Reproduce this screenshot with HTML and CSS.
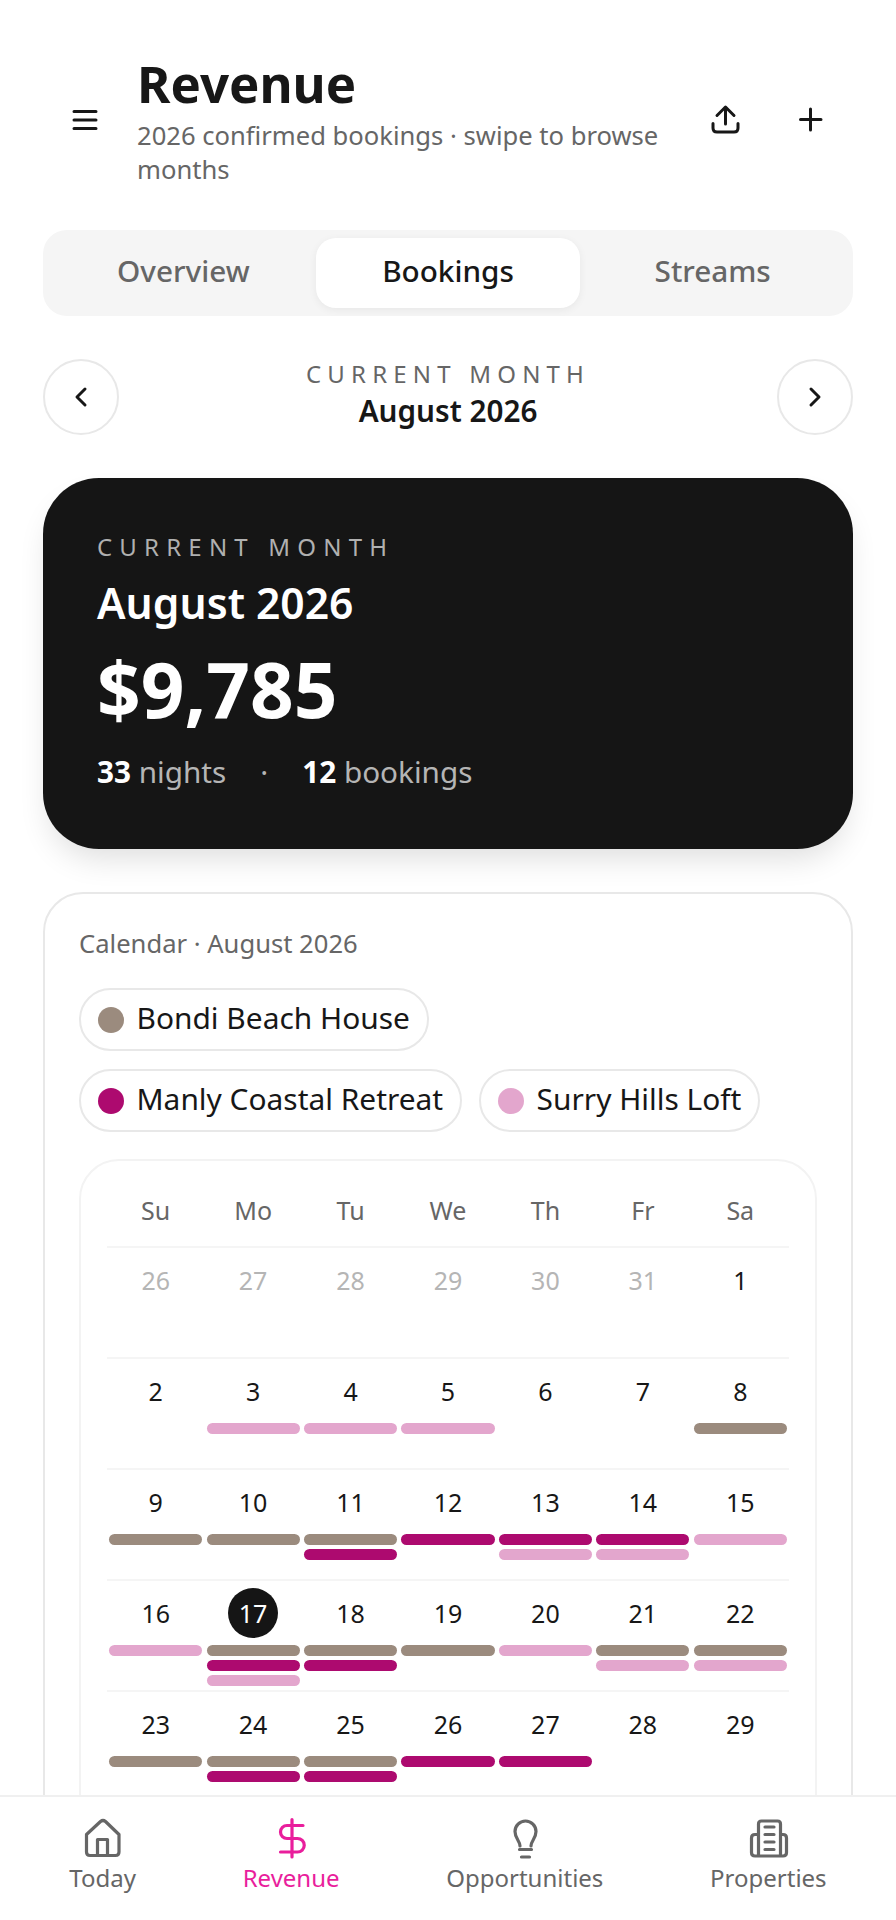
FILE: index.html
```html
<!DOCTYPE html>
<html lang="en">

<head>
    <meta charset="UTF-8">
    <meta name="viewport" content="width=device-width, initial-scale=1.0">
    <title>Revenue</title>
    <link rel="stylesheet" href="styles.css">
</head>

<body>
    <main class="page">
        <header class="top-bar">
            <button class="icon-btn" type="button" aria-label="Menu">
                <svg class="icon" viewBox="0 0 40 40"><path d="M9 13.500H31M9 22H31M9 30.500H31" /></svg>
            </button>
            <div class="top-title">
                <h1>Revenue</h1>
                <p>2026 confirmed bookings · swipe to browse months</p>
            </div>
            <div class="top-actions">
                <button class="icon-btn" type="button" aria-label="Share">
                    <svg class="icon" viewBox="0 0 40 40"><path d="M18.500 9V26M10 17.500L18.500 9L27 17.500M6 25.500V30Q6 34 10 34H27Q31 34 31 30V25.500" /></svg>
                </button>
                <button class="icon-btn" type="button" aria-label="Add">
                    <svg class="icon" viewBox="0 0 40 40"><path d="M19.500 11V32M9.500 21.500H30" /></svg>
                </button>
            </div>
        </header>

        <div class="tabs">
            <div class="tab">Overview</div>
            <div class="tab active">Bookings</div>
            <div class="tab">Streams</div>
        </div>

        <div class="month-nav">
            <button class="round-btn" type="button" aria-label="Previous month">
                <svg class="icon" viewBox="0 0 40 40"><path d="M24 12L16 20L24 28" /></svg>
            </button>
            <div class="month-label">
                <div class="eyebrow">CURRENT MONTH</div>
                <div class="month-name">August 2026</div>
            </div>
            <button class="round-btn" type="button" aria-label="Next month">
                <svg class="icon" viewBox="0 0 40 40"><path d="M16 12L24 20L16 28" /></svg>
            </button>
        </div>

        <section class="hero">
            <div class="eyebrow hero-eyebrow">CURRENT MONTH</div>
            <div class="hero-month">August 2026</div>
            <div class="hero-amount">$9,785</div>
            <div class="hero-stats">
                <span><b>33</b> nights</span>
                <span class="sep">·</span>
                <span><b>12</b> bookings</span>
            </div>
        </section>

        <section class="calendar-card">
            <div class="card-title">Calendar · August 2026</div>
            <div class="legend">
                <div class="chip"><span class="dot tan"></span>Bondi Beach House</div>
                <div class="chip"><span class="dot magenta"></span>Manly Coastal Retreat</div>
                <div class="chip"><span class="dot pink"></span>Surry Hills Loft</div>
            </div>

            <div class="calendar">
                <div class="week-head">
                    <div>Su</div><div>Mo</div><div>Tu</div><div>We</div><div>Th</div><div>Fr</div><div>Sa</div>
                </div>

                <div class="week">
                    <div class="day muted"><div class="num">26</div></div>
                    <div class="day muted"><div class="num">27</div></div>
                    <div class="day muted"><div class="num">28</div></div>
                    <div class="day muted"><div class="num">29</div></div>
                    <div class="day muted"><div class="num">30</div></div>
                    <div class="day muted"><div class="num">31</div></div>
                    <div class="day"><div class="num">1</div></div>
                </div>

                <div class="week">
                    <div class="day"><div class="num">2</div></div>
                    <div class="day"><div class="num">3</div><i class="bar pink"></i></div>
                    <div class="day"><div class="num">4</div><i class="bar pink"></i></div>
                    <div class="day"><div class="num">5</div><i class="bar pink"></i></div>
                    <div class="day"><div class="num">6</div></div>
                    <div class="day"><div class="num">7</div></div>
                    <div class="day"><div class="num">8</div><i class="bar tan"></i></div>
                </div>

                <div class="week">
                    <div class="day"><div class="num">9</div><i class="bar tan"></i></div>
                    <div class="day"><div class="num">10</div><i class="bar tan"></i></div>
                    <div class="day"><div class="num">11</div><i class="bar tan"></i><i class="bar magenta"></i></div>
                    <div class="day"><div class="num">12</div><i class="bar magenta"></i></div>
                    <div class="day"><div class="num">13</div><i class="bar magenta"></i><i class="bar pink"></i></div>
                    <div class="day"><div class="num">14</div><i class="bar magenta"></i><i class="bar pink"></i></div>
                    <div class="day"><div class="num">15</div><i class="bar pink"></i></div>
                </div>

                <div class="week">
                    <div class="day"><div class="num">16</div><i class="bar pink"></i></div>
                    <div class="day today"><div class="num">17</div><i class="bar tan"></i><i class="bar magenta"></i><i class="bar pink"></i></div>
                    <div class="day"><div class="num">18</div><i class="bar tan"></i><i class="bar magenta"></i></div>
                    <div class="day"><div class="num">19</div><i class="bar tan"></i></div>
                    <div class="day"><div class="num">20</div><i class="bar pink"></i></div>
                    <div class="day"><div class="num">21</div><i class="bar tan"></i><i class="bar pink"></i></div>
                    <div class="day"><div class="num">22</div><i class="bar tan"></i><i class="bar pink"></i></div>
                </div>

                <div class="week">
                    <div class="day"><div class="num">23</div><i class="bar tan"></i></div>
                    <div class="day"><div class="num">24</div><i class="bar tan"></i><i class="bar magenta"></i></div>
                    <div class="day"><div class="num">25</div><i class="bar tan"></i><i class="bar magenta"></i></div>
                    <div class="day"><div class="num">26</div><i class="bar magenta"></i></div>
                    <div class="day"><div class="num">27</div><i class="bar magenta"></i></div>
                    <div class="day"><div class="num">28</div></div>
                    <div class="day"><div class="num">29</div></div>
                </div>
            </div>
        </section>
    </main>

    <nav class="bottom-nav">
        <div class="nav-item">
            <svg class="nav-icon" viewBox="0 0 44 44">
                <path d="M5.500 18.500L19.500 5.500Q22 3.500 24.500 5.500L38 18.500V36Q38 39.500 34.500 39.500H9Q5.500 39.500 5.500 36ZM16.500 39.500V23.500H26.500V39.500" />
            </svg>
            <span>Today</span>
        </div>
        <div class="nav-item active">
            <svg class="nav-icon" viewBox="0 0 44 44">
                <path d="M23 3.500V41M34 9.500H18A6.500 6.500 0 0 0 18 22.500H28.500A6.750 6.750 0 0 1 28.500 36H11.500" />
            </svg>
            <span>Revenue</span>
        </div>
        <div class="nav-item">
            <svg class="nav-icon" viewBox="0 0 44 44">
                <path d="M17 30C17 25 12 22.500 12 15.500A10.500 10.500 0 0 1 33 15.500C33 22.500 28 25 28 30M16.500 33.500H28.500M18.500 41H26.500" />
            </svg>
            <span>Opportunities</span>
        </div>
        <div class="nav-item">
            <svg class="nav-icon" viewBox="0 0 44 44">
                <path d="M12.500 40V8Q12.500 5 15.500 5H31.500Q34.500 5 34.500 8V40ZM12.500 18.500H9Q5.500 18.500 5.500 22V36.500Q5.500 40 9 40H37Q40.500 40 40.500 36.500V22Q40.500 18.500 37 18.500H34.500M19 11H28M19 18.500H28M19 26H28M19 33.500H28" />
            </svg>
            <span>Properties</span>
        </div>
    </nav>
</body>

</html>
```
FILE: styles.css
```css
* {
    box-sizing: border-box;
}

body {
    font-family: "Noto Sans", "Open Sans", sans-serif;
    background-color: #ffffff;
    color: #171717;
    margin: 0;
    height: 1920px;
    display: flex;
    flex-direction: column;
    overflow: hidden;
}

.page {
    flex: 1;
    min-height: 0;
    overflow: hidden;
    display: flex;
    flex-direction: column;
    gap: 43px;
    padding: 48px 43px 0;
}

button {
    background: none;
    border: none;
    padding: 0;
    font: inherit;
    color: inherit;
    display: flex;
    align-items: center;
    justify-content: center;
}

.icon {
    width: 40px;
    height: 40px;
    fill: none;
    stroke: #171717;
    stroke-width: 3;
    stroke-linecap: round;
    stroke-linejoin: round;
}

/* header */
.top-bar {
    display: flex;
    align-items: center;
    gap: 10px;
    flex-shrink: 0;
}

.icon-btn {
    width: 84px;
    height: 84px;
    flex-shrink: 0;
}

.top-title {
    flex: 1;
    min-width: 0;
}

.top-title h1 {
    margin: 0;
    font-size: 51px;
    line-height: 71px;
    font-weight: 700;
}

.top-title p {
    margin: 0;
    font-size: 25.6px;
    line-height: 34px;
    color: #666666;
}

.top-actions {
    display: flex;
}

/* tabs */
.tabs {
    display: flex;
    flex-shrink: 0;
    height: 86px;
    padding: 8px;
    background-color: #f5f5f5;
    border-radius: 24px;
}

.tab {
    flex: 1;
    display: flex;
    align-items: center;
    justify-content: center;
    padding-bottom: 5px;
    font-size: 29.7px;
    font-weight: 500;
    color: #666666;
    border-radius: 20px;
}

.tab.active {
    background-color: #ffffff;
    color: #171717;
    box-shadow: 0 2px 8px rgba(0, 0, 0, 0.06);
}

/* month switcher */
.month-nav {
    display: flex;
    align-items: center;
    justify-content: space-between;
    flex-shrink: 0;
}

.round-btn {
    width: 76px;
    height: 76px;
    border: 2px solid #e8e8e8;
    border-radius: 50%;
}

.month-label {
    padding-bottom: 4px;
    text-align: center;
}

.eyebrow {
    margin-bottom: 2px;
    font-size: 24px;
    line-height: 30px;
    letter-spacing: 6.2px;
    color: #666666;
}

.month-name {
    font-size: 29.7px;
    line-height: 40px;
    font-weight: 600;
}

/* hero card */
.hero {
    flex-shrink: 0;
    height: 371px;
    padding: 54px 54px 0;
    background-color: #151515;
    border-radius: 56px;
    color: #ffffff;
    box-shadow: 0 16px 32px -8px rgba(0, 0, 0, 0.14);
}

.hero-eyebrow {
    margin-bottom: 0;
    letter-spacing: 7.2px;
    color: #b0b0b0;
}

.hero-month {
    margin-top: 12px;
    font-size: 42.6px;
    line-height: 56px;
    font-weight: 600;
}

.hero-amount {
    margin-top: 8px;
    font-size: 76.5px;
    line-height: 100px;
    font-weight: 700;
}

.hero-stats {
    margin-top: 15px;
    display: flex;
    gap: 34px;
    font-size: 29.7px;
    line-height: 38px;
    color: #b5b5b5;
}

.hero-stats b {
    color: #ffffff;
    font-weight: 700;
}

/* calendar card */
.calendar-card {
    flex-shrink: 0;
    padding: 33px 34px 40px;
    border: 2px solid #e8e8e8;
    border-radius: 40px;
}

.card-title {
    font-size: 25.6px;
    line-height: 34px;
    color: #666666;
}

.legend {
    margin-top: 27px;
    display: flex;
    flex-wrap: wrap;
    gap: 18px 17px;
}

.chip {
    display: flex;
    align-items: center;
    gap: 12.5px;
    height: 63px;
    padding: 0 17px 5px;
    border: 2px solid #e8e8e8;
    border-radius: 32px;
    font-size: 29.9px;
}

.dot {
    width: 26px;
    height: 26px;
    margin-top: 5px;
    border-radius: 50%;
}

.tan {
    background-color: #9b8b7e;
}

.magenta {
    background-color: #ad0a6f;
}

.pink {
    background-color: #e3a6cd;
}

.calendar {
    margin-top: 27px;
    padding: 32px 26px 30px;
    border: 2px solid #f3f3f3;
    border-radius: 40px;
}

.week-head,
.week {
    display: grid;
    grid-template-columns: repeat(7, 1fr);
}

.week-head {
    padding-bottom: 19px;
    text-align: center;
    font-size: 25px;
    line-height: 34px;
    color: #666666;
}

.week {
    height: 111px;
    border-top: 2px solid #f5f5f5;
}

.day {
    padding-top: 7px;
}

.num {
    width: 50px;
    height: 50px;
    margin: 0 auto 7px;
    display: flex;
    align-items: center;
    justify-content: center;
    font-size: 25px;
}

.muted .num {
    color: #b5b5b5;
}

.today .num {
    background-color: #151515;
    color: #ffffff;
    border-radius: 50%;
}

.bar {
    display: block;
    height: 11px;
    margin: 0 2.2px 4px;
    border-radius: 6px;
}

/* bottom navigation */
.bottom-nav {
    flex-shrink: 0;
    height: 125px;
    padding: 19px 16px 0;
    display: flex;
    justify-content: space-around;
    align-items: flex-start;
    background-color: #ffffff;
    border-top: 2px solid #f0f0f0;
}

.nav-item {
    display: flex;
    flex-direction: column;
    align-items: center;
    font-size: 24px;
    line-height: 32px;
    color: #666666;
}

.nav-item span {
    margin-top: 2px;
}

.nav-icon {
    width: 44px;
    height: 44px;
    fill: none;
    stroke: #666666;
    stroke-width: 3.2;
    stroke-linecap: round;
    stroke-linejoin: round;
}

.nav-item.active {
    color: #e91e9c;
}

.nav-item.active .nav-icon {
    stroke: #e91e9c;
}
```
